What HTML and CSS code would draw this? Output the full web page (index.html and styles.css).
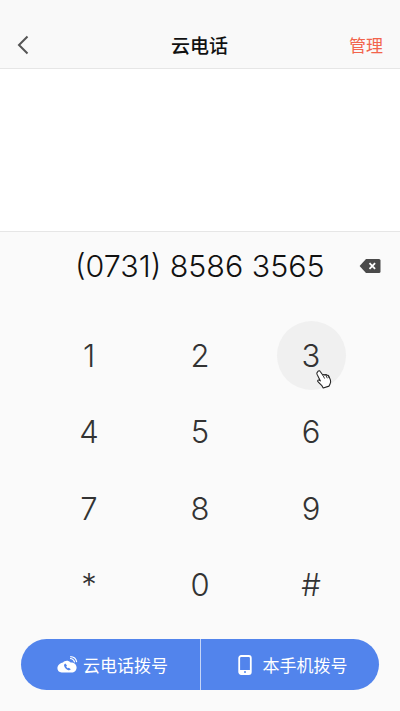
FILE: index.html
```html
<!DOCTYPE html>
<html lang="zh">
<head>
<meta charset="utf-8">
<title>云电话</title>
<link rel="stylesheet" href="styles.css">
</head>
<body>
<div class="page">
  <header class="nav">
    <svg class="back" viewBox="0 0 14 20" width="14" height="20"><path d="M11.500 1.500 3 10l8.500 8.500" fill="none" stroke="#555" stroke-width="2"/></svg>
    <div class="title">云电话</div>
    <div class="manage">管理</div>
  </header>
  <div class="blank"></div>
  <section class="dial">
    <div class="number-row">
      <div class="number">(0731) 8586 3565</div>
      <svg class="del" viewBox="0 0 22 16" width="22" height="16"><path d="M7 1h13a1.500 1.500 0 0 1 1.500 1.500v11A1.500 1.500 0 0 1 20 15H7L.6 8z" fill="#4a4a4a"/><path d="m10.500 5.200 5.600 5.600m0-5.600-5.600 5.600" stroke="#fff" stroke-width="1.800"/></svg>
    </div>
    <div class="keys">
      <div class="key">1</div>
      <div class="key">2</div>
      <div class="key active">3
        <svg class="hand" viewBox="0 0 20 22" width="18" height="20"><path d="M3.500 2.200c.8-.7 1.800-.4 2.300.4l3 4.300c0-.9 1.600-1.300 2.200-.2.300-.8 1.800-.8 2.300.3.600-.4 1.700-.1 2.100.8l1.700 4.200c.6 1.800.3 3.500-.5 4.900l-1 2-6.500 2-1.400-2.500c-1-1-2.700-2.500-4.400-4.500-.8-1-.2-2 1-1.700l1.700.9-3.200-6.200-.6-1.300c-.3-.7-.2-1.500.3-1.900z" fill="#fff" stroke="#222" stroke-width="1.200" stroke-linejoin="round"/><path d="m9 7.200 1.700 3.300m1.300-3.700 1.700 3.400m.6-3.100 1.500 3" stroke="#222" stroke-width="1" fill="none"/></svg>
      </div>
      <div class="key">4</div>
      <div class="key">5</div>
      <div class="key">6</div>
      <div class="key">7</div>
      <div class="key">8</div>
      <div class="key">9</div>
      <div class="key">*</div>
      <div class="key">0</div>
      <div class="key">#</div>
    </div>
    <div class="actions">
      <div class="action call">
        <svg class="cloud" viewBox="0 0 21 18" width="21" height="18"><path d="M6 6.500c1.500-2.200 5.500-2.700 7.600 0 2.700-.3 6 1.500 6 5 0 3-2.300 5-5 5H4.600C2 16.500.4 14.500.4 12.300.4 9.500 3 7 6 6.500z" fill="#fff"/><path d="M8.300 7.500c-.9.500-1.400 1.200-1.200 2.200.5 2 2.200 3.800 4.200 4.500 1 .3 1.900-.1 2.500-1l-2-1.500-1 .6c-.7-.4-1.300-1.100-1.600-1.900l.8-.9z" fill="#5284ec"/><path d="M13 2.500c2.400.1 4.100 1.600 4.600 3.800M13.200.6c3.400.1 6 2.400 6.500 5.500" fill="none" stroke="#fff" stroke-width="1.200"/></svg>
        <span>云电话拨号</span>
      </div>
      <div class="action mobile">
        <svg class="phone" viewBox="0 0 14 20" width="14" height="20"><rect x="1.200" y="1" width="11.600" height="18" rx="2" fill="none" stroke="#fff" stroke-width="1.800"/><rect x="1.200" y="15" width="11.600" height="4" rx="1" fill="#fff"/><circle cx="7" cy="17" r="1" fill="#5284ec"/></svg>
        <span>本手机拨号</span>
      </div>
    </div>
  </section>
</div>
</body>
</html>
```
FILE: styles.css
```css
* { box-sizing: border-box; }
html, body { margin: 0; padding: 0; }
body {
  width: 400px;
  height: 711px;
  overflow: hidden;
  background: #fafafa;
  font-family: "Noto Sans CJK SC", "Noto Sans", sans-serif;
}
.page { display: flex; flex-direction: column; height: 711px; }
.nav {
  height: 69px;
  padding: 22px 17px 0 16px;
  border-bottom: 1px solid #e6e6e6;
  display: grid;
  grid-template-columns: 1fr auto 1fr;
  align-items: center;
  background: #f9f9f9;
}
.back { display: block; }
.title { font-size: 19px; font-weight: 500; color: #111; line-height: 24px; }
.manage { justify-self: end; font-size: 17px; color: #f2644c; line-height: 24px; }
.blank { height: 163px; background: #fff; border-bottom: 1px solid #e6e6e6; }
.dial { flex: 1; display: flex; flex-direction: column; }
.number-row {
  height: 68px;
  display: grid;
  grid-template-columns: 1fr auto;
  align-items: center;
  padding: 0 19px 0 75px;
}
.number {
  font-family: Inter, sans-serif;
  font-weight: 300;
  font-size: 30.400px;
  color: #111;
  line-height: 68px;
  white-space: nowrap;
}
.del { display: block; }
.keys {
  display: grid;
  grid-template-columns: repeat(3, 111px);
  grid-auto-rows: 76.500px;
  justify-content: center;
  margin-top: 17px;
}
.key {
  position: relative;
  align-self: center;
  justify-self: center;
  width: 69px;
  height: 69px;
  border-radius: 50%;
  display: flex;
  align-items: center;
  justify-content: center;
  font-family: Inter, sans-serif;
  font-weight: 300;
  font-size: 31px;
  color: #333;
}
.active { background: #f0f0f0; }
.hand { position: absolute; left: 38px; top: 48px; }
.actions {
  margin: 16px 21px 0;
  height: 51px;
  border-radius: 26px;
  background: #5284ec;
  display: grid;
  grid-template-columns: 1fr 1fr;
  overflow: hidden;
}
.action {
  display: flex;
  align-items: center;
  justify-content: center;
  gap: 5px;
  color: #fff;
  font-size: 17px;
  line-height: 22px;
}
.call { padding-left: 4px; }
.mobile { border-left: 1px solid #c5d5f7; padding-left: 5px; }
.cloud, .phone { display: block; }
.phone { margin-right: 6px; }
```
